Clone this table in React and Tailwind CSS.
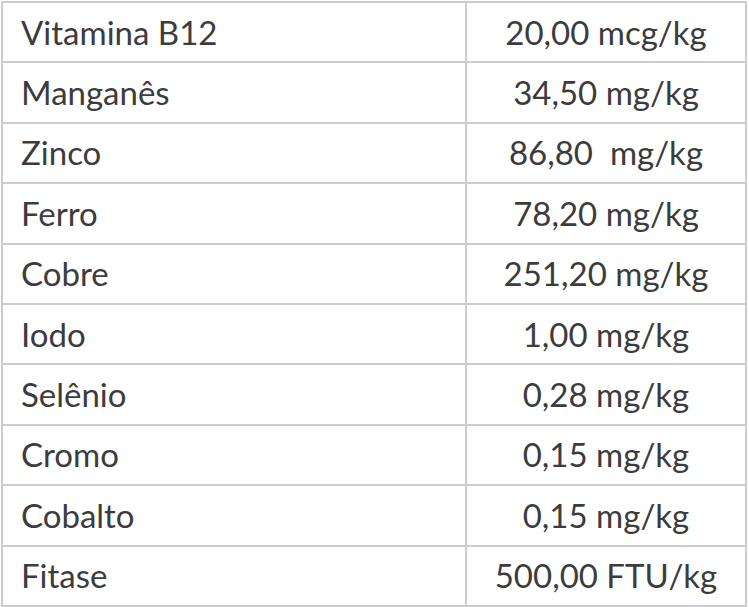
import React from 'react';

const rows = [
  ['Vitamina B12', '20,00 mcg/kg'],
  ['Manganês', '34,50 mg/kg'],
  ['Zinco', '86,80\u00a0 mg/kg'],
  ['Ferro', '78,20 mg/kg'],
  ['Cobre', '251,20 mg/kg'],
  ['Iodo', '1,00 mg/kg'],
  ['Selênio', '0,28 mg/kg'],
  ['Cromo', '0,15 mg/kg'],
  ['Cobalto', '0,15 mg/kg'],
  ['Fitase', '500,00 FTU/kg'],
];

const App = () => {
  return (
    <div className="bg-white w-[749px] h-[607px] pt-px pl-px" style={{ fontFamily: 'Lato, "Open Sans", sans-serif' }}>
      <table className="w-[746px] border-collapse text-[33px] text-[#3c3c3c] leading-none">
        <tbody>
          {rows.map(([name, value]) => (
            <tr key={name} className="h-[60.4px]">
              <td className="border-2 border-[#cccccc] w-[464px] pl-[18px] align-middle">{name}</td>
              <td className="border-2 border-[#cccccc] text-center align-middle">{value}</td>
            </tr>
          ))}
        </tbody>
      </table>
    </div>
  );
};

export default App;
